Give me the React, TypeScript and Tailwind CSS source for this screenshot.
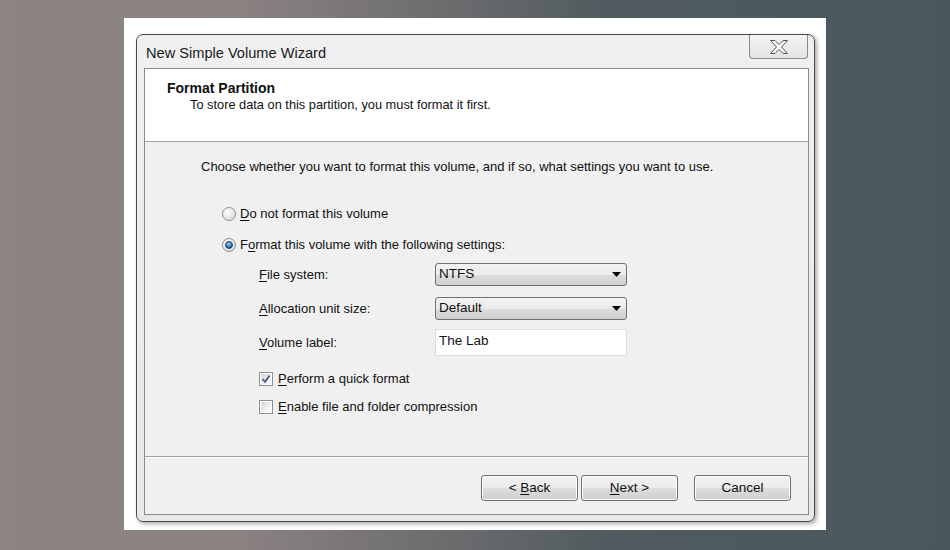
import React from 'react';

// 下線付きのアクセスキー文字
function Key({ c }: { c: string }) {
  return <span className="underline underline-offset-2 decoration-1">{c}</span>;
}

function Radio({ checked }: { checked?: boolean }) {
  return (
    <span className="relative inline-flex w-[14px] h-[14px] rounded-full border border-[#8e8f8f] bg-[radial-gradient(circle_at_40%_35%,#ffffff_0%,#e6e6e6_55%,#cfcfcf_100%)] items-center justify-center shrink-0">
      {checked && (
        <span className="w-[8px] h-[8px] rounded-full bg-[radial-gradient(circle_at_45%_35%,#9fdcff_0%,#2b7fc4_50%,#0d3a66_100%)] border border-[#1c4a72]" />
      )}
    </span>
  );
}

function Checkbox({ checked }: { checked?: boolean }) {
  return (
    <span className="inline-flex w-[14px] h-[14px] border border-[#8e8f8f] bg-white p-[1px] shrink-0">
      <span className="flex-1 bg-[linear-gradient(135deg,#d6d6d6_0%,#efefef_60%,#fbfbfb_100%)] flex items-center justify-center">
        {checked && (
          <svg width="10" height="10" viewBox="0 0 10 10">
            <path d="M1.5 5.2 L4 7.8 L8.6 1.6" fill="none" stroke="#4a5f8c" strokeWidth="1.8" />
          </svg>
        )}
      </span>
    </span>
  );
}

function Dropdown({ value }: { value: string }) {
  return (
    <div className="w-[192px] h-[23px] rounded-[3px] border border-[#707070] bg-[linear-gradient(#f2f2f2_0%,#ebebeb_50%,#dddddd_51%,#cfcfcf_100%)] flex items-center pl-[3px] pr-[5px]">
      <span className="flex-1 text-[13.5px] text-[#111]">{value}</span>
      <svg width="9" height="5" viewBox="0 0 9 5">
        <path d="M0 0 H9 L4.5 5 Z" fill="#000" />
      </svg>
    </div>
  );
}

function Button({ children }: { children: React.ReactNode }) {
  return (
    <div className="w-[97px] h-[26px] rounded-[3px] border border-[#707070] bg-[linear-gradient(#f2f2f2_0%,#ebebeb_50%,#dddddd_51%,#cfcfcf_100%)] shadow-[inset_0_0_0_1px_#fcfcfc] flex items-center justify-center text-[13.5px] text-[#111]">
      <span>{children}</span>
    </div>
  );
}

export default function App() {
  return (
    <div
      className="w-[950px] h-[550px] flex justify-center pt-[18px] bg-[linear-gradient(90deg,#8d8383_0%,#8b8282_25%,#6c6c6e_47%,#4f5b5f_64%,#4a575c_100%)]"
      style={{ fontFamily: '"Liberation Sans", Arial, sans-serif' }}
    >
      {/* 白い枠 */}
      <div className="w-[702px] h-[512px] bg-white pl-[12px] pt-[16px]">
        {/* ウィンドウ */}
        <div className="w-[679px] h-[488px] rounded-[7px] border border-[#4a4a4a] bg-[linear-gradient(#f0f0f0,#e8e8e8)] shadow-[2px_2px_4px_rgba(0,0,0,0.35)] flex flex-col">
          {/* タイトルバー */}
          <div className="h-[33px] flex items-start justify-between">
            <span className="ml-[9px] mt-[8px] text-[14.6px] text-[#1a1a1a]">New Simple Volume Wizard</span>
            <div className="mr-[6px] w-[59px] h-[24px] rounded-b-[4px] border border-t-0 border-[#8a8a8a] bg-[linear-gradient(#f4f4f4,#e4e4e4)] flex items-center justify-center">
              <svg width="18" height="14" viewBox="-0.5 -0.5 18 14">
                <polygon
                  points="0,0 4.5,0 8.5,4 12.5,0 17,0 11,6.5 17,13 12.5,13 8.5,9 4.5,13 0,13 6,6.5"
                  fill="#fbfbfb"
                  stroke="#555"
                  strokeWidth="1"
                  strokeLinejoin="round"
                />
              </svg>
            </div>
          </div>

          {/* 中身 */}
          <div className="ml-[7px] w-[665px] h-[447px] border border-[#8b8b8b] bg-[#f0f0f0] flex flex-col text-[#111]">
            {/* ヘッダー */}
            <div className="h-[73px] bg-white border-b border-[#a0a0a0] pl-[22px] pt-[11px]">
              <div className="text-[14px] font-bold leading-[17px]">Format Partition</div>
              <div className="pl-[23px] text-[12.8px] leading-[16px]">To store data on this partition, you must format it first.</div>
            </div>

            {/* 本文 */}
            <div className="flex-1 flex flex-col pl-[56px] pt-[17px] text-[13px]">
              <div className="h-[16px] leading-[16px]">Choose whether you want to format this volume, and if so, what settings you want to use.</div>

              <div className="mt-[30px] ml-[21px] h-[18px] flex items-center gap-[4px]">
                <Radio />
                <span><Key c="D" />o not format this volume</span>
              </div>
              <div className="mt-[13px] ml-[21px] h-[18px] flex items-center gap-[4px]">
                <Radio checked />
                <span>F<Key c="o" />rmat this volume with the following settings:</span>
              </div>

              <div className="ml-[58px] flex flex-col">
                <div className="mt-[9px] h-[23px] flex items-center">
                  <span className="w-[176px]"><Key c="F" />ile system:</span>
                  <Dropdown value="NTFS" />
                </div>
                <div className="mt-[11px] h-[23px] flex items-center">
                  <span className="w-[176px]"><Key c="A" />llocation unit size:</span>
                  <Dropdown value="Default" />
                </div>
                <div className="mt-[9px] h-[27px] flex items-center">
                  <span className="w-[176px]"><Key c="V" />olume label:</span>
                  <div className="w-[192px] h-[27px] bg-white border border-[#dcdcdc] pl-[3px] pt-[2px] text-[13.5px] leading-[18px]">The Lab</div>
                </div>
                <div className="mt-[14px] h-[18px] flex items-center gap-[5px]">
                  <Checkbox checked />
                  <span><Key c="P" />erform a quick format</span>
                </div>
                <div className="mt-[10px] h-[18px] flex items-center gap-[5px]">
                  <Checkbox />
                  <span><Key c="E" />nable file and folder compression</span>
                </div>
              </div>
            </div>

            {/* フッター */}
            <div className="h-[58px] border-t border-[#a0a0a0] shadow-[inset_0_1px_0_#ffffff] flex justify-end items-start pt-[18px] pr-[17px]">
              <div className="flex">
                <Button>&lt; <Key c="B" />ack</Button>
                <div className="ml-[3px]">
                  <Button><Key c="N" />ext &gt;</Button>
                </div>
                <div className="ml-[16px]">
                  <Button>Cancel</Button>
                </div>
              </div>
            </div>
          </div>
        </div>
      </div>
    </div>
  );
}
